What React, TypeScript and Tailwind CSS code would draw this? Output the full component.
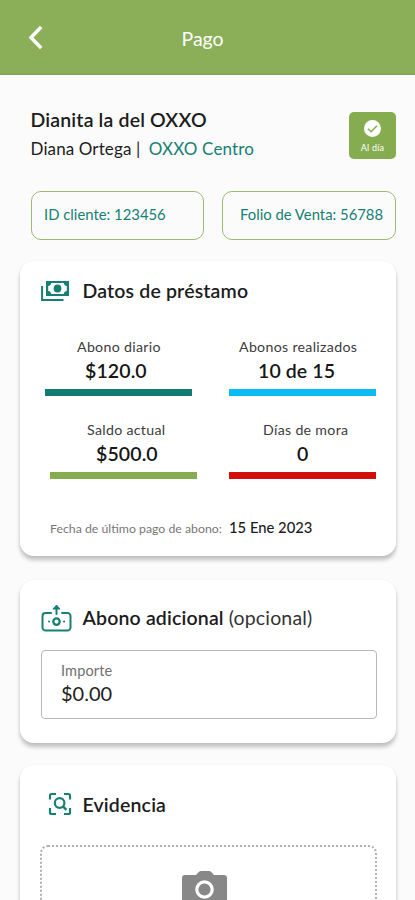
import type { ReactNode } from "react";

function Card({ className, children }: { className: string; children: ReactNode }) {
  return (
    <section
      className={`ml-[20px] w-[376px] rounded-[14px] bg-white shadow-[0_4px_4px_rgba(0,0,0,0.24),0_0_2px_rgba(0,0,0,0.05)] ${className}`}
    >
      {children}
    </section>
  );
}

type StatProps = {
  label: string;
  value: string;
  labelClass: string;
  valueClass: string;
  barClass: string;
};

function Stat({ label, value, labelClass, valueClass, barClass }: StatProps) {
  return (
    <div className="h-[83px] w-[147px] whitespace-nowrap">
      <div className={`h-[20px] text-[14.2px] leading-[20px] tracking-[0.3px] text-[#3c3c3c] ${labelClass}`}>{label}</div>
      <div className={`mt-[1px] h-[26px] text-[19.5px] font-semibold leading-[26px] tracking-[0.1px] text-[#161616] ${valueClass}`}>{value}</div>
      <div className={`mt-[5px] h-[7px] ${barClass}`} />
    </div>
  );
}

function MoneyIcon() {
  return (
    <svg className="h-[20px] w-[28px]" viewBox="0 0 28 20" fill="none">
      <path d="M1.1 5v13.9H22.5" stroke="#168074" strokeWidth="2" />
      <path fillRule="evenodd" clipRule="evenodd" fill="#168074" d="M5 0h23v15H5zM10.2 2C10 3.7 9 4.7 7.2 5v5c1.8.3 2.8 1.3 3 3h12.6c.2-1.7 1.2-2.7 3-3V5c-1.8-.3-2.8-1.3-3-3z" />
      <circle cx="16.5" cy="7.5" r="3.9" fill="#168074" />
    </svg>
  );
}

function DepositIcon() {
  return (
    <svg className="h-[28px] w-[31px]" viewBox="0 0 31 28" fill="none" stroke="#168074" strokeWidth="2" strokeLinecap="round" strokeLinejoin="round">
      <path d="M10 9H4.500a3 3 0 0 0-3 3v11.500a3 3 0 0 0 3 3h22a3 3 0 0 0 3-3V12a3 3 0 0 0-3-3H21" />
      <path d="M15.500 10V2" />
      <path d="M12.300 4.900 15.500 1.700l3.200 3.200z" fill="#168074" strokeWidth="1.200" />
      <circle cx="15.500" cy="17.600" r="3.200" strokeWidth="2.300" />
      <path d="M8 17.600h.1M23 17.600h.1" />
    </svg>
  );
}

function ScanIcon() {
  return (
    <svg className="mb-[2px] h-[24px] w-[24px]" viewBox="0 0 24 24" fill="none" stroke="#168074" strokeWidth="2.200">
      <path d="M2 7.500V3.500a1.500 1.500 0 0 1 1.500-1.500H8M16 2h4.500a1.500 1.500 0 0 1 1.500 1.500v4M2 16v4.500A1.500 1.500 0 0 0 3.500 22H8M16 22h4.500a1.500 1.500 0 0 0 1.500-1.500V16" />
      <circle cx="11.600" cy="11" r="4.800" />
      <path d="m15 14.400 3.400 3.400" strokeWidth="2.400" />
    </svg>
  );
}

export default function App() {
  return (
    <div className="h-[900px] w-full overflow-hidden bg-[#fbfbfb] font-['Lato',sans-serif] text-[#1c1c1c]">
      <header className="flex h-[75px] items-start border-b-2 border-[#7fa94c] bg-[#8aaf58] pt-[25px] text-white">
        <svg className="ml-[28px] h-[26px] w-[16px]" viewBox="0 0 16 26" fill="none">
          <path d="M13.200 2 3 12.500l10.200 10.500" stroke="white" strokeWidth="3.500" />
        </svg>
        <h1 className="ml-[137.500px] mt-[1px] text-[19.500px] leading-[26px]">Pago</h1>
      </header>

      <div className="flex h-[116px] justify-between pl-[30.500px] pr-[19px] pt-[32px]">
        <div className="whitespace-nowrap">
          <h2 className="text-[19.500px] font-semibold leading-[25px] tracking-[0.160px]">Dianita la del OXXO</h2>
          <p className="mt-[5px] text-[17px] leading-[24px] tracking-[0.120px]">
            Diana Ortega | <span className="ml-[4px] text-[#168074]">OXXO Centro</span>
          </p>
        </div>
        <div className="mt-[5px] flex h-[47px] w-[47px] flex-col items-center rounded-[5px] bg-[#85ad50] pt-[8px] text-white">
          <svg className="h-[17px] w-[17px]" viewBox="0 0 17 17" fill="none">
            <circle cx="8.500" cy="8.500" r="8.500" fill="white" />
            <path d="m4 8.700 3.100 3.100 5.900-6" stroke="#85ad50" strokeWidth="1.500" />
          </svg>
          <span className="mt-[5px] text-[9px] leading-[12px] tracking-[0.200px]">Al día</span>
        </div>
      </div>

      <div className="flex justify-between whitespace-nowrap pl-[31px] pr-[19px] text-[14.850px] leading-[45px] text-[#168074]">
        <div className="h-[49px] w-[173px] rounded-[10px] border border-[#9cba72] pl-[12px]">ID cliente: 123456</div>
        <div className="h-[49px] w-[174px] rounded-[10px] border border-[#9cba72] pl-[17px]">Folio de Venta: 56788</div>
      </div>

      <Card className="mt-[21px] h-[295px] pt-[16px]">
        <div className="flex h-[28px] items-center pl-[21px]">
          <MoneyIcon />
          <h3 className="ml-[13.500px] text-[19.500px] font-semibold leading-[28px] tracking-[0.160px]">Datos de préstamo</h3>
        </div>
        <div className="mt-[32px] flex pl-[25px]">
          <Stat label="Abono diario" value="$120.0" labelClass="pl-[32px]" valueClass="pl-[40px]" barClass="bg-[#107b70]" />
          <div className="ml-[37px]">
            <Stat label="Abonos realizados" value="10 de 15" labelClass="pl-[10px]" valueClass="pl-[29px]" barClass="bg-[#0dbcf5]" />
          </div>
        </div>
        <div className="flex pl-[30px]">
          <Stat label="Saldo actual" value="$500.0" labelClass="pl-[37px]" valueClass="pl-[46px]" barClass="bg-[#85ad50]" />
          <div className="ml-[32px]">
            <Stat label="Días de mora" value="0" labelClass="pl-[34px]" valueClass="pl-[68px]" barClass="bg-[#d50c0c]" />
          </div>
        </div>
        <div className="mt-[13px] flex h-[22px] items-baseline whitespace-nowrap pl-[30px] leading-[22px]">
          <span className="w-[179px] text-[12.300px] text-[#777]">Fecha de último pago de abono:</span>
          <span className="text-[14.800px] font-medium">15 Ene 2023</span>
        </div>
      </Card>

      <Card className="mt-[24px] h-[163px] pt-[23px]">
        <div className="flex h-[30px] items-center pl-[21px]">
          <DepositIcon />
          <h3 className="ml-[10.500px] whitespace-nowrap text-[19.500px] font-semibold leading-[30px] tracking-[0.160px]">
            Abono adicional <span className="font-normal text-[#333]">(opcional)</span>
          </h3>
        </div>
        <div className="ml-[21px] mt-[17px] h-[69px] w-[336px] rounded-[4px] border border-[#b8b8b8] pl-[19px] pt-[10px]">
          <div className="text-[14.500px] leading-[20px] tracking-[0.150px] text-[#707070]">Importe</div>
          <div className="text-[20px] leading-[24px] text-[#222]">$0.00</div>
        </div>
      </Card>

      <Card className="mt-[22px] h-[200px] pt-[26px]">
        <div className="flex h-[28px] items-center pl-[28px]">
          <ScanIcon />
          <h3 className="ml-[10.500px] text-[19.500px] font-semibold leading-[28px] tracking-[0.160px]">Evidencia</h3>
        </div>
        <div className="ml-[20px] mt-[26px] flex h-[120px] w-[337px] justify-center rounded-[8px] border-2 border-dotted border-[#b0b0b0] pt-[24px]">
          <svg className="mr-[8px] h-[40px] w-[45px]" viewBox="0 0 45 40">
            <path fill="#888" d="M3 4h11l3-3.200Q18 0 19 0h8q1 0 2 .8L32 4h10q3 0 3 3v30q0 3-3 3H3q-3 0-3-3V7q0-3 3-3Z" />
            <circle cx="22.500" cy="18.500" r="7.700" fill="none" stroke="white" strokeWidth="3.200" />
          </svg>
        </div>
      </Card>
    </div>
  );
}
